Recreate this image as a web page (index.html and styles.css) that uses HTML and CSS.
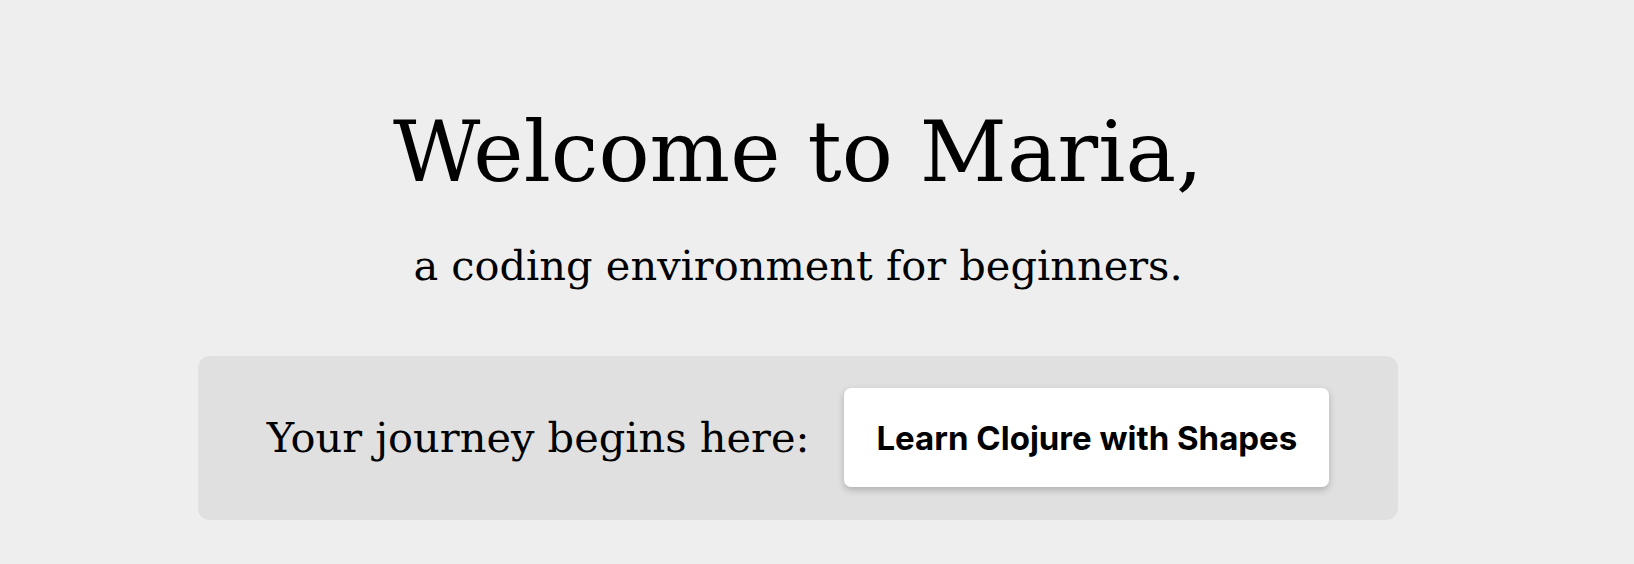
FILE: index.html
```html
<!DOCTYPE html>
<html lang="en">
<head>
<meta charset="utf-8">
<title>Maria</title>
<link rel="stylesheet" href="styles.css">
</head>
<body>
<main class="page">
  <h1 class="title">Welcome to Maria,</h1>
  <p class="subtitle">a coding environment for beginners.</p>
  <section class="journey">
    <span class="journey-text">Your journey begins here:</span>
    <a class="journey-button" href="#">Learn Clojure with Shapes</a>
  </section>
</main>
</body>
</html>
```

FILE: styles.css
```css
html, body {
  margin: 0;
  padding: 0;
  background: #eeeeee;
}
body {
  font-family: "DejaVu Serif", Georgia, serif;
  color: #000;
}
.page {
  width: 1200px;
  margin: 0 0 0 198px;
  display: flex;
  flex-direction: column;
  align-items: center;
}
.title {
  font-weight: normal;
  font-size: 85px;
  line-height: 1;
  margin: 109px 0 0 0;
}
.subtitle {
  font-size: 41.5px;
  line-height: 1;
  margin: 51px 0 0 0;
}
.journey {
  align-self: stretch;
  margin-top: 69px;
  background: #e0e0e0;
  border-radius: 12px;
  height: 164px;
  display: flex;
  align-items: center;
  justify-content: center;
  gap: 35px;
}
.journey-text {
  font-size: 41.5px;
}
.journey-button {
  display: flex;
  align-items: center;
  height: 99px;
  padding: 0 32px;
  background: #fff;
  border-radius: 7px;
  box-shadow: 0 3px 7px rgba(0, 0, 0, 0.22);
  font-family: Inter, "Liberation Sans", sans-serif;
  font-weight: 700;
  font-size: 33px;
  color: #000;
  text-decoration: none;
}
```
